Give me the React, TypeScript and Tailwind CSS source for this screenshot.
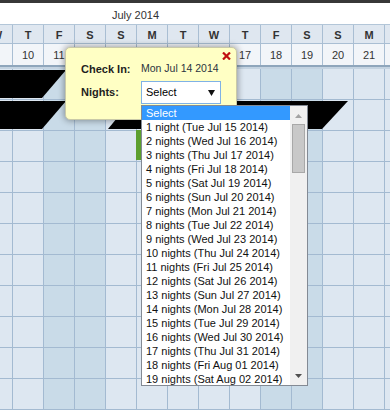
import React from "react"

const days = [
  { d: "W", n: "" },
  { d: "T", n: "10" },
  { d: "F", n: "11", we: true },
  { d: "S", n: "12", we: true },
  { d: "S", n: "13" },
  { d: "M", n: "14" },
  { d: "T", n: "15" },
  { d: "W", n: "16" },
  { d: "T", n: "17" },
  { d: "F", n: "18", we: true },
  { d: "S", n: "19", we: true },
  { d: "S", n: "20" },
  { d: "M", n: "21" },
  { d: "", n: "" },
]

const nightDates = [
  "Tue Jul 15 2014",
  "Wed Jul 16 2014",
  "Thu Jul 17 2014",
  "Fri Jul 18 2014",
  "Sat Jul 19 2014",
  "Sun Jul 20 2014",
  "Mon Jul 21 2014",
  "Tue Jul 22 2014",
  "Wed Jul 23 2014",
  "Thu Jul 24 2014",
  "Fri Jul 25 2014",
  "Sat Jul 26 2014",
  "Sun Jul 27 2014",
  "Mon Jul 28 2014",
  "Tue Jul 29 2014",
  "Wed Jul 30 2014",
  "Thu Jul 31 2014",
  "Fri Aug 01 2014",
  "Sat Aug 02 2014",
]

const rows = Array.from({ length: 11 }, (_, i) => i)

function Popup() {
  return (
    <div className="absolute left-[65px] top-[47px] w-[172px] h-[73px] bg-[#ffffc4] rounded-[5px] border border-[#c9c9a8] shadow-[0_0_6px_1px_rgba(0,0,0,0.35)]">
      <svg className="absolute top-[4px] right-[5px]" width="9" height="8" viewBox="0 0 9 8">
        <path d="M1 0.5 L8 7.5 M8 0.5 L1 7.5" stroke="#c01010" strokeWidth="2.2" />
      </svg>
      <div className="flex flex-col pt-[14px] pl-[15px] gap-[5px]">
        <div className="flex items-center h-[14px]">
          <span className="w-[60px] text-[11px] font-bold text-[#1e1e1e]">Check In:</span>
          <span className="text-[10.5px] text-[#2b3440]">Mon Jul 14 2014</span>
        </div>
        <div className="flex items-center h-[23px]">
          <span className="w-[60px] text-[11px] font-bold text-[#1e1e1e]">Nights:</span>
          <div className="flex items-center w-[80px] h-[23px] bg-white border border-[#7fb2e6] pl-[4px] pr-[5px]">
            <span className="text-[11px] text-black">Select</span>
            <svg className="ml-auto" width="7" height="6" viewBox="0 0 7 6">
              <path d="M0 0 H7 L3.5 6 Z" fill="#111" />
            </svg>
          </div>
        </div>
      </div>
    </div>
  )
}

function NightsList() {
  return (
    <div className="absolute left-[141px] top-[105px] w-[167px] h-[281px] bg-white border border-[#838a94] flex">
      <div className="flex-1 flex flex-col text-[11px] leading-[14px] text-[#111]">
        <div className="bg-[#3399ff] text-white pl-[4px]">Select</div>
        {nightDates.map((d, i) => (
          <div key={i} className="pl-[4px] whitespace-nowrap">
            {i + 1} {i === 0 ? "night" : "nights"} ({d})
          </div>
        ))}
      </div>
      <div className="w-[17px] bg-[#f0f0f0] flex flex-col items-center">
        <svg className="mt-[8px]" width="7" height="4" viewBox="0 0 7 4">
          <path d="M0 4 L3.5 0 L7 4 Z" fill="#a3a3a3" />
        </svg>
        <div className="mt-[6px] w-[13px] h-[49px] bg-[#c8c8c8] border border-[#a8a8a8]" />
        <svg className="mt-auto mb-[7px]" width="7" height="4" viewBox="0 0 7 4">
          <path d="M0 0 H7 L3.5 4 Z" fill="#505050" />
        </svg>
      </div>
    </div>
  )
}

export default function App() {
  return (
    <div className="relative w-[390px] h-[411px] overflow-hidden bg-white font-['Liberation_Sans',Arial,sans-serif]">
      <div className="h-[3px] bg-[#383838]" />
      <div className="h-[21px] pl-[112px] pt-[3px] flex items-center text-[11px] text-[#333]">July 2014</div>

      <div className="ml-[-18px] grid grid-cols-[repeat(14,31px)] border-t border-[#b3c6d8]">
        {days.map((c, i) => (
          <div
            key={"d" + i}
            className="h-[19px] pt-[2px] bg-[#dfe7f0] border-r border-b border-[#a9bed3] flex items-center justify-center text-[11px] font-bold text-[#333]"
          >
            {c.d}
          </div>
        ))}
        {days.map((c, i) => (
          <div
            key={"n" + i}
            className="h-[21px] pt-[1px] bg-[#f2f5f9] border-r border-[#a9bed3] flex items-center justify-center text-[11px] text-[#333]"
          >
            {c.n}
          </div>
        ))}
      </div>
      <div className="h-[4px] border-t-2 border-[#8fa6bc] bg-[#c4d3e1]" />

      <div className="ml-[-18px] grid grid-cols-[repeat(14,31px)]">
        {rows.map((r) =>
          days.map((c, i) => (
            <div
              key={r + "-" + i}
              className={
                "h-[31px] border-r border-b border-[#a3bad1] " +
                (c.we ? "bg-[#c9dbe8]" : "bg-[#dde7f1]")
              }
            />
          ))
        )}
      </div>

      <div className="absolute left-[-20px] top-[70px] w-[86px] h-[28px] bg-black [clip-path:polygon(0_0,100%_0,62px_100%,0_100%)]" />
      <div className="absolute left-[-20px] top-[101px] w-[86px] h-[28px] bg-black [clip-path:polygon(0_0,100%_0,62px_100%,0_100%)]" />
      <div className="absolute left-[108px] top-[101px] w-[240px] h-[28px] bg-black [clip-path:polygon(23px_0,100%_0,214px_100%,0_100%)]" />
      <div className="absolute left-[136px] top-[130px] w-[6px] h-[30px] bg-[#5c9f2e]" />

      <Popup />
      <NightsList />
    </div>
  )
}
